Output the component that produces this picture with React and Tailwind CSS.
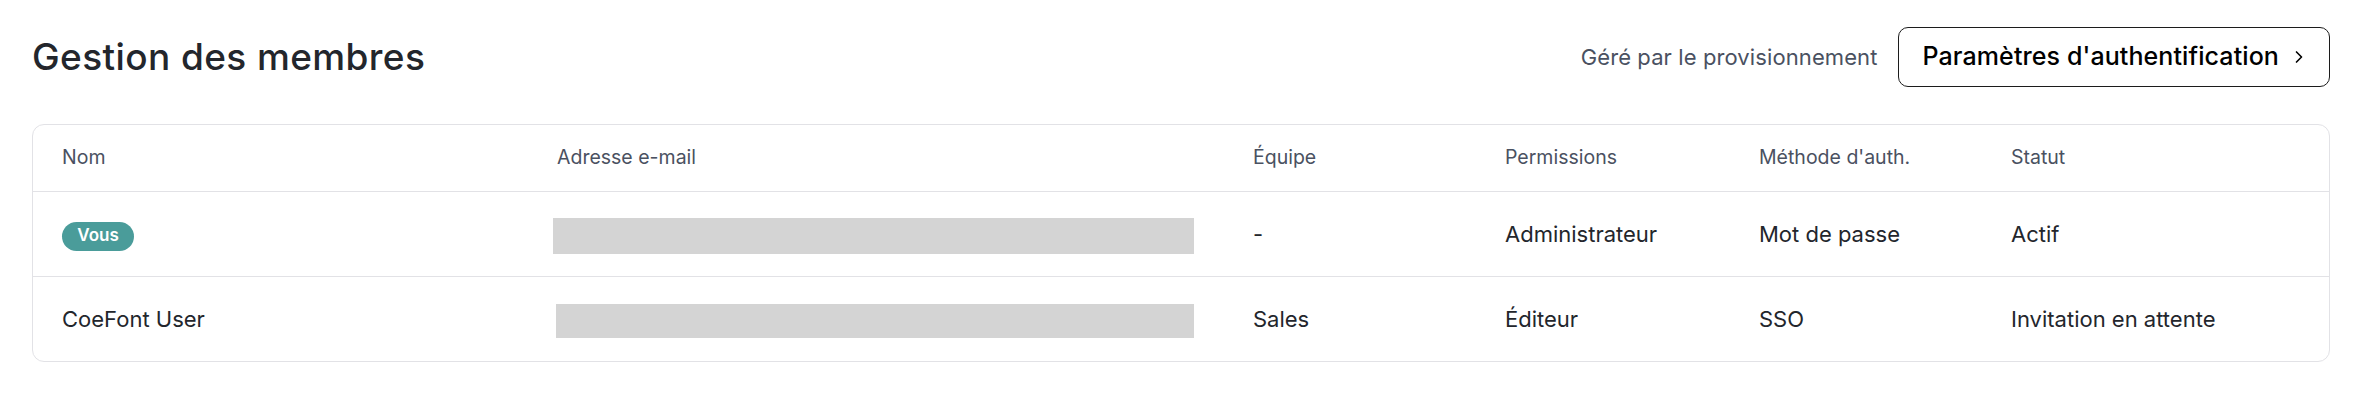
import React from "react";
import { ChevronRight } from "lucide-react";

const members = [
  { name: null, you: true, team: "-", role: "Administrateur", auth: "Mot de passe", status: "Actif", bar: "ml-[-4px] w-[641px] h-[36px] mt-[4px]" },
  { name: "CoeFont User", you: false, team: "Sales", role: "Éditeur", auth: "SSO", status: "Invitation en attente", bar: "ml-[-1px] w-[638px] h-[34px] mt-[4px]" },
];

const cols = "grid grid-cols-[494px_696px_252px_254px_252px_1fr]";

function App() {
  return (
    <div className="bg-white min-h-screen pl-[32px] pr-[50px] pt-[27px] font-['Inter','Liberation_Sans',sans-serif]">

      {/* HEADER */}
      <div className="flex justify-between items-center h-[60px]">
        <h1 className="text-[37px] font-medium text-[#23262c] tracking-[0.4px]">Gestion des membres</h1>
        <div className="flex items-center gap-[20px]">
          <span className="text-[22px] text-[#4a5161] tracking-[0.1px]">Géré par le provisionnement</span>
          <button className="h-[60px] flex items-center gap-[10px] pl-[24px] pr-[20px] border border-[#1c1c1c] rounded-[10px] text-[25px] font-medium text-black tracking-[0.1px]">
            Paramètres d'authentification
            <ChevronRight size={20} strokeWidth={2} />
          </button>
        </div>
      </div>

      {/* TABLE */}
      <div className="mt-[37px] border border-[#e2e2e6] rounded-[12px] overflow-hidden">
        <div className={`${cols} h-[66px] items-center text-[19.5px] text-[#4a5161]`}>
          <div className="pl-[29px]">Nom</div>
          <div className="pl-[30px]">Adresse e-mail</div>
          <div className="pl-[30px]">Équipe</div>
          <div className="pl-[30px]">Permissions</div>
          <div className="pl-[30px]">Méthode d'auth.</div>
          <div className="pl-[30px]">Statut</div>
        </div>

        {members.map((m, i) => (
          <div key={i} className={`${cols} h-[85px] items-center border-t border-[#e2e2e6] text-[22px] text-[#23262c]`}>
            <div className="pl-[29px]">
              {m.you ? (
                <span className="inline-flex items-center justify-center w-[72px] h-[29px] rounded-full bg-[#4a9c9a] text-white text-[17px] font-semibold">
                  Vous
                </span>
              ) : (
                m.name
              )}
            </div>
            <div className="pl-[30px]">
              <div className={`bg-[#d4d4d4] ${m.bar}`} />
            </div>
            <div className="pl-[30px]">{m.team}</div>
            <div className="pl-[30px]">{m.role}</div>
            <div className="pl-[30px]">{m.auth}</div>
            <div className="pl-[30px]">{m.status}</div>
          </div>
        ))}
      </div>
    </div>
  );
}

export default App;
